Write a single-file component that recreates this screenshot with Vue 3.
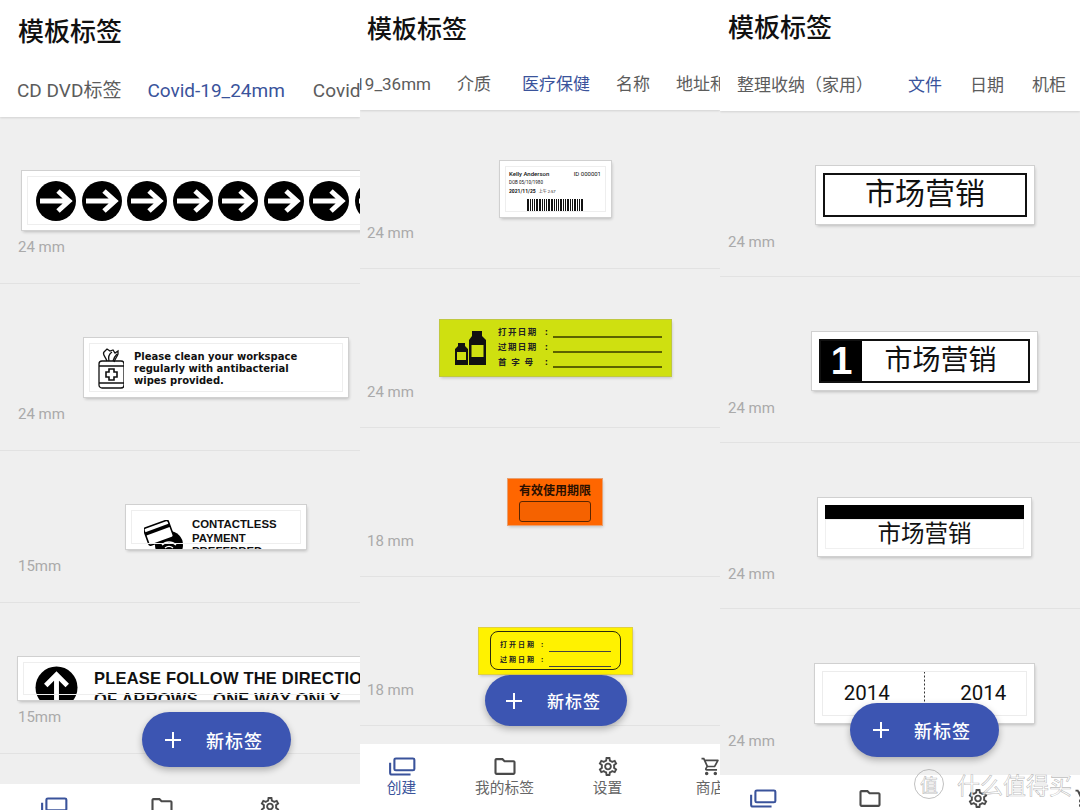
<script setup>
const phones = [
  {
    id: 'p1',
    tabs: [
      { text: 'CD DVD标签' },
      { text: 'Covid-19_24mm', active: true },
      { text: 'Covid-19_36mm' }
    ],
    rows: [
      { kind: 'arrows', size: '24 mm', offset: 22 },
      { kind: 'wipes', size: '24 mm', offset: 84 },
      { kind: 'contactless', size: '15mm', offset: 126 },
      { kind: 'direction', size: '15mm', offset: 18 }
    ]
  },
  {
    id: 'p2',
    tabs: [
      { text: 'Covid-19_36mm' },
      { text: '介质' },
      { text: '医疗保健', active: true },
      { text: '名称' },
      { text: '地址和' }
    ],
    rows: [
      { kind: 'patient', size: '24 mm', offset: 140 },
      { kind: 'green', size: '24 mm', offset: 80 },
      { kind: 'orange', size: '18 mm', offset: 148 },
      { kind: 'yellow', size: '18 mm', offset: 119 }
    ]
  },
  {
    id: 'p3',
    tabs: [
      { text: '整理收纳（家用）' },
      { text: '文件', active: true },
      { text: '日期' },
      { text: '机柜' }
    ],
    rows: [
      { kind: 'boxed', size: '24 mm', offset: 96 },
      { kind: 'numbered', size: '24 mm', offset: 92 },
      { kind: 'barred', size: '24 mm', offset: 98 },
      { kind: 'years', size: '24 mm', offset: 95 }
    ]
  }
]

const navItems = ['创建', '我的标签', '设置', '商店']
const barcode = [2, 1, 1, 1, 2, 2, 1, 1, 1, 2, 2, 1, 1, 1, 2, 1, 1, 2, 1, 1, 2, 1, 1, 2]
</script>

<template>
  <div class="screens">
    <section v-for="phone in phones" :key="phone.id" class="phone" :class="phone.id">
      <header class="top">
        <h1 class="title">模板标签</h1>
        <div class="tabs">
          <span v-for="tab in phone.tabs" :key="tab.text" class="tab" :class="{ active: tab.active }">{{ tab.text }}</span>
        </div>
      </header>

      <div class="list">
        <div v-for="(row, i) in phone.rows" :key="i" class="row">
          <div class="tape" :class="row.kind" :style="{ marginLeft: row.offset + 'px' }">
            <!-- arrows -->
            <template v-if="row.kind === 'arrows'">
              <svg v-for="n in 9" :key="n" class="arrow-dot" viewBox="0 0 40 40">
                <circle cx="20" cy="20" r="20" fill="#000" />
                <path d="M4 20H33M22 10l11 10-11 10" fill="none" stroke="#fff" stroke-width="5" />
              </svg>
            </template>

            <template v-else-if="row.kind === 'wipes'">
              <svg class="wipes-icon" viewBox="0 0 26 43" fill="none" stroke="#111" stroke-width="1.3">
                <path d="M9 15C7 10 4 8 6 6l3-3 3 2 3-1 2 3 3-2 0 3c-1 3-3 5-4 8" />
                <path d="M11 15c-1-4 0-7 3-9M15 15c1-3 2-5 4-7" />
                <rect x="1" y="15" width="25" height="27" rx="3" />
                <path d="M1 20h25M1 37h25" />
                <path d="M11 23h5v3h3v5h-3v3h-5v-3H8v-5h3z" stroke-width="1.6" />
              </svg>
              <p class="wipes-text">Please clean your workspace<br />regularly with antibacterial<br />wipes provided.</p>
            </template>

            <template v-else-if="row.kind === 'contactless'">
              <svg class="card-icon" viewBox="0 0 40 34">
                <circle cx="25" cy="25" r="14" fill="#000" />
                <g transform="rotate(-20 14 14)">
                  <rect x="2" y="4" width="26" height="18" rx="2" fill="#fff" stroke="#000" stroke-width="1.6" />
                  <rect x="2" y="8" width="26" height="3.5" fill="#000" />
                </g>
                <path d="M18 25c4-4 10-4 14 0M21 28c2.500-2 5.500-2 8 0" fill="none" stroke="#fff" stroke-width="1.400" />
              </svg>
              <p class="contactless-text">CONTACTLESS<br />PAYMENT<br />PREFERRED</p>
            </template>

            <template v-else-if="row.kind === 'direction'">
              <svg class="up-icon" viewBox="0 0 44 44">
                <circle cx="22" cy="22" r="21.500" fill="#000" />
                <path d="M22 42V9M11 20 22 9l11 11" fill="none" stroke="#fff" stroke-width="5" />
              </svg>
              <p class="direction-text">PLEASE FOLLOW THE DIRECTION<br />OF ARROWS - ONE WAY ONLY</p>
            </template>

            <template v-else-if="row.kind === 'patient'">
              <div class="patient-top"><b>Kelly Anderson</b><span>ID 000001</span></div>
              <div class="patient-dob">DOB 05/10/1980</div>
              <div class="patient-date"><b>2021/11/25</b><span>上午 2:57</span></div>
              <div class="bars">
                <i v-for="(w, n) in barcode" :key="n" :style="{ width: w + 'px' }"></i>
              </div>
            </template>

            <template v-else-if="row.kind === 'green'">
              <svg class="bottles" viewBox="0 0 32 36">
                <path d="M3 13h7v3l3 3v16H0V19l3-3z" fill="#111" />
                <rect x="2" y="22" width="9" height="8" fill="#cfe010" />
                <path d="M17 1h10v5l4 4v25H14V10l3-4z" fill="#111" />
                <rect x="16.500" y="15" width="12" height="12" fill="#cfe010" />
              </svg>
              <div class="green-fields">
                <div class="field"><b>打开日期</b><em>:</em><u></u></div>
                <div class="field"><b>过期日期</b><em>:</em><u></u></div>
                <div class="field"><b>首 字 母</b><em>:</em><u></u></div>
              </div>
            </template>

            <template v-else-if="row.kind === 'orange'">
              <div class="orange-title">有效使用期限</div>
              <div class="orange-box"></div>
            </template>

            <template v-else-if="row.kind === 'yellow'">
              <div class="yellow-box">
                <div class="field"><b>打开日期</b><em>:</em><u></u></div>
                <div class="field"><b>过期日期</b><em>:</em><u></u></div>
              </div>
            </template>

            <div v-else-if="row.kind === 'boxed'" class="boxed-in">市场营销</div>

            <div v-else-if="row.kind === 'numbered'" class="numbered-in">
              <span class="num">1</span><span class="num-text">市场营销</span>
            </div>

            <div v-else-if="row.kind === 'barred'" class="barred-in">
              <div class="black-bar"></div>
              <div class="barred-text">市场营销</div>
            </div>

            <div v-else class="years-in">
              <span class="year-left">2014</span><span class="year-right">2014</span>
            </div>
          </div>
          <div class="size">{{ row.size }}</div>
        </div>
      </div>

      <nav class="nav">
        <div v-for="(item, i) in navItems" :key="item" class="nav-item" :class="{ current: i === 0 }">
          <svg v-if="i === 0" class="nav-icon wide" viewBox="0 0 28 20" fill="none" stroke="currentColor" stroke-width="2.200">
            <rect x="6" y="1.500" width="21" height="12.500" rx="1.500" />
            <path d="M1.500 6v10.500a2 2 0 0 0 2 2H23" />
          </svg>
          <svg v-else-if="i === 1" class="nav-icon" viewBox="2 3 20 18" fill="#4a4a4a">
            <path d="M9.170 6l2 2H20v10H4V6h5.170M10 4H4c-1.100 0-1.990.9-1.990 2L2 18c0 1.100.9 2 2 2h16c1.100 0 2-.9 2-2V8c0-1.100-.9-2-2-2h-8l-2-2z" />
          </svg>
          <svg v-else-if="i === 2" class="nav-icon" viewBox="2 2 20 20" fill="#4a4a4a">
            <path d="M19.430 12.980c.04-.32.07-.64.07-.98 0-.34-.03-.66-.07-.98l2.110-1.650c.19-.15.24-.42.12-.64l-2-3.460c-.09-.16-.26-.25-.44-.25-.06 0-.12.01-.17.03l-2.490 1c-.52-.4-1.080-.73-1.690-.98l-.38-2.650C14.460 2.180 14.250 2 14 2h-4c-.25 0-.46.18-.49.42l-.38 2.650c-.61.25-1.170.59-1.690.98l-2.490-1c-.06-.02-.12-.03-.18-.03-.17 0-.34.09-.43.25l-2 3.460c-.13.22-.07.49.12.64l2.110 1.650c-.04.32-.07.65-.07.98 0 .33.03.66.07.98l-2.110 1.650c-.19.15-.24.42-.12.64l2 3.460c.09.16.26.25.44.25.06 0 .12-.01.17-.03l2.490-1c.52.4 1.080.73 1.690.98l.38 2.650c.03.24.24.42.49.42h4c.25 0 .46-.18.49-.42l.38-2.650c.61-.25 1.170-.59 1.690-.98l2.490 1c.06.02.12.03.18.03.17 0 .34-.09.43-.25l2-3.460c.12-.22.07-.49-.12-.64l-2.110-1.650zm-1.980-1.710c.04.31.05.52.05.73 0 .21-.02.43-.05.73l-.14 1.130.89.7 1.080.84-.7 1.210-1.270-.51-1.040-.42-.9.68c-.43.32-.84.56-1.250.73l-1.060.43-.16 1.130-.2 1.350h-1.400l-.19-1.350-.16-1.130-1.060-.43c-.43-.18-.83-.41-1.230-.71l-.91-.7-1.060.43-1.270.51-.7-1.210 1.080-.84.89-.7-.14-1.130c-.03-.31-.05-.54-.05-.74s.02-.43.05-.73l.14-1.130-.89-.7-1.080-.84.7-1.210 1.270.51 1.040.42.9-.68c.43-.32.84-.56 1.250-.73l1.060-.43.16-1.130.2-1.350h1.390l.19 1.350.16 1.130 1.060.43c.43.18.83.41 1.230.71l.91.7 1.060-.43 1.270-.51.7 1.210-1.070.85-.89.7.14 1.130zM12 8c-2.210 0-4 1.790-4 4s1.790 4 4 4 4-1.790 4-4-1.790-4-4-4zm0 6c-1.100 0-2-.9-2-2s.9-2 2-2 2 .9 2 2-.9 2-2 2z" />
          </svg>
          <svg v-else class="nav-icon" viewBox="1 1 22 22" fill="#4a4a4a">
            <path d="M15.550 13c.75 0 1.410-.41 1.750-1.030l3.580-6.490c.37-.66-.11-1.480-.87-1.480H5.210l-.94-2H1v2h2l3.600 7.590-1.350 2.440C4.520 15.370 5.480 17 7 17h12v-2H7l1.100-2h7.450zM6.160 6h12.150l-2.760 5H8.530L6.160 6zM7 18c-1.100 0-1.990.9-1.990 2S5.900 22 7 22s2-.9 2-2-.9-2-2-2zm10 0c-1.100 0-1.990.9-1.990 2s.89 2 1.990 2 2-.9 2-2-.9-2-2-2z" />
          </svg>
          <span class="nav-label">{{ item }}</span>
        </div>
      </nav>

      <button class="fab">
        <svg class="plus" viewBox="0 0 16 16"><path d="M8 0v16M0 8h16" stroke="#fff" stroke-width="2" /></svg>
        <span>新标签</span>
      </button>
    </section>

    <div class="watermark"><span class="wm-badge">值</span><span>什么值得买</span></div>
  </div>
</template>

<style scoped>
.screens {
  position: relative;
  display: grid;
  grid-template-columns: repeat(3, 360px);
  width: 1080px;
  height: 810px;
  overflow: hidden;
  font-family: Roboto, "Noto Sans CJK SC", sans-serif;
}

.phone {
  position: relative;
  display: flex;
  flex-direction: column;
  height: 810px;
  overflow: hidden;
  background: #efefef;
}

.top {
  flex: none;
  display: flex;
  flex-direction: column;
  background: #fff;
  box-shadow: 0 1px 2px rgba(0, 0, 0, 0.12);
  position: relative;
  z-index: 1;
}

.title {
  margin: 0;
  font-size: 26px;
  line-height: 36px;
  font-weight: 500;
  color: #111;
  font-family: "Noto Sans CJK SC", sans-serif;
}

.tabs {
  display: flex;
  white-space: nowrap;
  color: #5c5c5c;
  overflow: hidden;
}

.tab {
  flex: none;
}

.tab.active {
  color: #3a539b;
}

/* per-screen metrics */
.p1 .top { height: 117px; padding: 12px 0 0 18px; box-sizing: border-box; }
.p1 .tabs { margin: 28px 0 0 -1px; gap: 26px; font-size: 19px; line-height: 30px; }
.p1 .tab.active { margin-right: 2px; }
.p1 .list { height: 667px; }
.p1 .row { padding: 54px 0 26px; }
.p1 .size { margin-left: 18px; }
.p1 .nav-item { width: 108px; }

.p2 .top { height: 110px; padding: 9px 0 0 7px; box-sizing: border-box; }
.p2 .title { font-size: 25px; }
.p2 .tabs { margin: 24px 0 0 -59px; gap: 26px; font-size: 17px; line-height: 30px; }
.p2 .tab.active { margin-left: 5px; }
.p2 .list { height: 634px; }
.p2 .row { padding: 51px 0 25px; }
.p2 .size { margin: 6px 0 0 7px; }
.p2 .nav { margin-left: -10px; }
.p2 .nav-item { width: 103px; }
.p2 .fab { font-size: 17px; }

.p3 .top { height: 111px; padding: 8px 0 0 8px; box-sizing: border-box; }
.p3 .tabs { margin: 26px 0 0 9px; gap: 28px; font-size: 17px; line-height: 30px; }
.p3 .tab.active { margin-left: 7px; }
.p3 .list { height: 664px; }
.p3 .row { padding: 55px 0 24px; }
.p3 .size { margin: 8px 0 0 8px; }
.p3 .nav { margin-left: -11px; padding-top: 14px; }
.p3 .nav-item { width: 107.5px; }
.p3 .nav-label { margin-top: 8px; }

.list {
  flex: none;
  overflow: hidden;
}

.row {
  border-bottom: 1px solid #e2e2e2;
  overflow: hidden;
}

.size {
  margin-top: 7px;
  font-size: 15px;
  line-height: 20px;
  color: #aaa;
}

.tape {
  box-sizing: border-box;
  background: #fff;
  box-shadow: 0 0 0 1px #d0d0d0, 1px 2px 3px rgba(0, 0, 0, 0.22);
  overflow: hidden;
  color: #111;
}

.arrows,
.wipes,
.contactless,
.direction,
.patient {
  outline: 1px solid #eee;
  outline-offset: -6px;
}

/* first screen */
.arrows {
  display: flex;
  gap: 5.500px;
  align-items: center;
  width: 520px;
  height: 59px;
  padding-left: 14px;
}

.arrow-dot {
  flex: none;
  width: 40px;
  height: 40px;
}

.wipes {
  display: flex;
  align-items: center;
  width: 264px;
  height: 59px;
  padding-left: 14px;
}

.wipes-icon {
  flex: none;
  width: 26px;
  height: 43px;
}

.wipes-text {
  margin: 2px 0 0 10px;
  font: bold 10px/12px "DejaVu Sans", sans-serif;
  white-space: nowrap;
}

.contactless {
  display: flex;
  width: 180px;
  height: 44px;
  padding: 11px 0 0 18px;
}

.card-icon {
  flex: none;
  width: 40px;
  height: 34px;
  margin-top: 4px;
}

.contactless-text {
  margin: 2px 0 0 8px;
  font: bold 11.400px/13.500px "Liberation Sans", sans-serif;
  white-space: nowrap;
}

.direction {
  display: flex;
  width: 520px;
  height: 43px;
  padding: 8px 0 0 17px;
}

.up-icon {
  flex: none;
  width: 43px;
  height: 43px;
  margin-top: 1px;
}

.direction-text {
  margin: 3px 0 0 16px;
  font: bold 16.500px/21px "Liberation Sans", sans-serif;
  letter-spacing: 0.200px;
  white-space: nowrap;
}

/* second screen */
.patient {
  width: 111px;
  height: 56px;
  padding: 8px 10px 0 9px;
  font-size: 5px;
  line-height: 9px;
}

.patient-top {
  display: flex;
  justify-content: space-between;
  font-size: 6px;
}

.patient-top b {
  font-weight: 500;
}

.patient-dob {
  font-size: 4.500px;
}

.patient-date {
  display: flex;
  gap: 3px;
}

.patient-date span {
  font-size: 4px;
}

.bars {
  display: flex;
  justify-content: center;
  gap: 1px;
  height: 12px;
  margin-top: 3px;
}

.bars i {
  display: block;
  background: #111;
}

.green {
  display: flex;
  align-items: center;
  width: 231px;
  height: 56px;
  padding: 0 9px 0 15px;
  background: #cfe010;
  box-shadow: 0 0 0 1px #c0c840, 1px 2px 3px rgba(0, 0, 0, 0.2);
}

.bottles {
  flex: none;
  width: 32px;
  height: 36px;
}

.green-fields {
  flex: 1;
  margin: 0 0 5px 11px;
}

.field {
  display: flex;
  align-items: center;
  font-family: "Noto Sans CJK SC", sans-serif;
  white-space: nowrap;
}

.field b {
  font-weight: 700;
  color: #222;
}

.field em {
  font-style: normal;
  font-weight: 700;
}

.field u {
  display: block;
  flex: 1;
  text-decoration: none;
  align-self: flex-end;
}

.green .field {
  height: 15px;
  font-size: 8.500px;
  letter-spacing: 1.400px;
}

.green .field b {
  width: 47px;
}

.green .field em {
  width: 8px;
}

.green .field u {
  border-bottom: 2px solid #5c6200;
}

.orange {
  width: 94px;
  height: 46px;
  padding-top: 2px;
  background: #ff6600;
  box-shadow: 0 0 0 1px #e8a070, 1px 2px 3px rgba(0, 0, 0, 0.2);
  text-align: center;
}

.orange-title {
  font: 700 12px/17px "Noto Sans CJK SC", sans-serif;
  color: #2a1000;
}

.orange-box {
  box-sizing: border-box;
  width: 72px;
  height: 21px;
  margin: 3px auto 0;
  border: 1px solid #5a2500;
  border-radius: 3px;
  background: #f56200;
}

.yellow {
  width: 153px;
  height: 46px;
  padding: 3px 11px 4px;
  background: #fff200;
  box-shadow: 0 0 0 1px #e0d040, 1px 2px 3px rgba(0, 0, 0, 0.2);
}

.yellow-box {
  box-sizing: border-box;
  height: 39px;
  padding: 4px 9px 0 9px;
  border: 1.500px solid #2a2a10;
  border-radius: 8px;
}

.yellow .field {
  height: 15.500px;
  font-size: 7px;
  letter-spacing: 2px;
}

.yellow .field b {
  width: 41px;
}

.yellow .field em {
  width: 8px;
}

.yellow .field u {
  border-bottom: 1px solid #444;
}

/* third screen */
.boxed,
.numbered,
.barred,
.years {
  padding: 7px;
  height: 58px;
  font-family: "Noto Sans CJK SC", sans-serif;
}

.boxed { width: 218px; }
.numbered { width: 225px; }
.barred { width: 213px; }
.years { width: 219px; height: 59px; }

.boxed-in {
  box-sizing: border-box;
  height: 44px;
  border: 2px solid #111;
  font-size: 30px;
  line-height: 33px;
  text-align: center;
}

.numbered-in {
  box-sizing: border-box;
  display: flex;
  height: 44px;
  border: 2px solid #111;
}

.num {
  flex: none;
  width: 41px;
  background: #000;
  color: #fff;
  font: bold 39px/40px "Liberation Sans", sans-serif;
  text-align: center;
}

.num-text {
  flex: 1;
  padding-right: 9px;
  font-size: 28px;
  line-height: 35px;
  text-align: center;
}

.black-bar {
  height: 14px;
  background: #000;
}

.barred-text {
  height: 30px;
  font-size: 23.500px;
  line-height: 27px;
  text-align: center;
  box-shadow: inset 0 0 0 1px #f0f0f0;
}

.years-in {
  display: grid;
  grid-template-columns: 1fr 1fr;
  height: 45px;
  box-shadow: inset 0 0 0 1px #ececec;
  font: 20.500px/45px Roboto, sans-serif;
  text-align: center;
  background: linear-gradient(#333 50%, transparent 50%) center / 1px 4px repeat-y;
}

.year-left { padding-right: 13px; }
.year-right { padding-left: 15px; }

/* bottom bar */
.nav {
  flex: none;
  display: flex;
  height: 66px;
  padding-top: 13px;
  box-sizing: border-box;
  background: #fff;
  position: relative;
}

.nav-item {
  flex: none;
  display: flex;
  flex-direction: column;
  align-items: center;
  color: #666;
}

.nav-item.current {
  color: #3a539b;
}

.nav-icon {
  display: block;
  width: 22px;
  height: 19px;
}

.nav-icon.wide {
  width: 28px;
}

.nav-label {
  margin-top: 1px;
  font: 14.700px/20px "Noto Sans CJK SC", sans-serif;
}

.fab {
  position: absolute;
  z-index: 2;
  display: flex;
  align-items: center;
  box-sizing: border-box;
  border: none;
  border-radius: 28px;
  background: #3c55b2;
  color: #fff;
  font: 500 18px/1 "Noto Sans CJK SC", sans-serif;
  letter-spacing: 1px;
  box-shadow: 0 3px 7px rgba(0, 0, 0, 0.28);
}

.plus {
  flex: none;
  width: 16px;
  height: 16px;
  margin-right: 25px;
}

.p1 .fab { left: 142px; top: 712px; width: 149px; height: 55px; padding-left: 23px; }
.p2 .fab { left: 125px; top: 675px; width: 142px; height: 51px; padding-left: 21px; }
.p3 .fab { left: 130px; top: 703px; width: 149px; height: 54px; padding-left: 23px; }

.watermark {
  position: absolute;
  z-index: 3;
  left: 914px;
  top: 769px;
  display: flex;
  align-items: center;
  gap: 13px;
  font: 400 23px/30px "Noto Sans CJK SC", sans-serif;
  color: rgba(255, 255, 255, 0.75);
  -webkit-text-stroke: 0.6px rgba(130, 130, 130, 0.55);
}

.wm-badge {
  display: flex;
  align-items: center;
  justify-content: center;
  width: 28px;
  height: 28px;
  border: 1px solid rgba(150, 150, 150, 0.6);
  border-radius: 50%;
  font-size: 18px;
}
</style>
